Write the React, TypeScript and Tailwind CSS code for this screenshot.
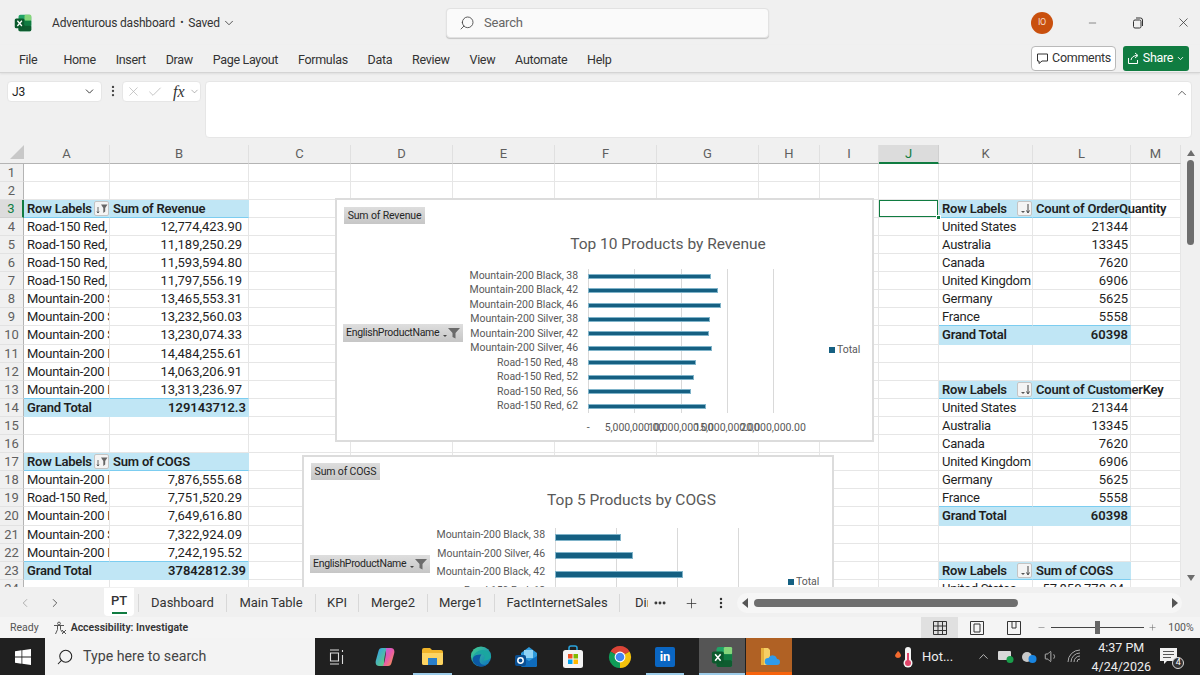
import {
  Check,
  ChevronDown,
  ChevronLeft,
  ChevronRight,
  ChevronUp,
  Ellipsis,
  EllipsisVertical,
  Minus,
  Plus,
  Search,
  Volume1,
  X,
} from 'lucide-react'
import type { ReactNode } from 'react'
import clsx from 'clsx'

const UI = "font-['Roboto',sans-serif]"

const menus = ['Home', 'Insert', 'Draw', 'Page Layout', 'Formulas', 'Data', 'Review', 'View', 'Automate', 'Help']
const columns = ['A', 'B', 'C', 'D', 'E', 'F', 'G', 'H', 'I', 'J', 'K', 'L', 'M']

type Cell = {
  text?: string
  bold?: boolean
  right?: boolean
  blue?: boolean
  line?: boolean
  spill?: boolean
  pad?: boolean
  button?: 'filter' | 'sort'
}

const cells: Record<string, Cell> = {}

function pivot(a: string, b: string, start: number, heading: string, rows: [string, string][], total: string, button: 'filter' | 'sort') {
  cells[a + start] = { text: 'Row Labels', bold: true, blue: true, line: true, button }
  cells[b + start] = { text: heading, bold: true, blue: true, line: true, spill: true }
  rows.forEach(([label, value], i) => {
    const last = i === rows.length - 1
    cells[a + (start + i + 1)] = { text: label, line: last }
    cells[b + (start + i + 1)] = { text: value, right: true, line: last, pad: value.includes(',') }
  })
  const end = start + rows.length + 1
  cells[a + end] = { text: 'Grand Total', bold: true, blue: true }
  cells[b + end] = { text: total, bold: true, blue: true, right: true }
}

pivot('A', 'B', 3, 'Sum of Revenue', [
  ['Road-150 Red,', '12,774,423.90'],
  ['Road-150 Red,', '11,189,250.29'],
  ['Road-150 Red,', '11,593,594.80'],
  ['Road-150 Red,', '11,797,556.19'],
  ['Mountain-200 Silver, 46', '13,465,553.31'],
  ['Mountain-200 Silver, 42', '13,232,560.03'],
  ['Mountain-200 Silver, 38', '13,230,074.33'],
  ['Mountain-200 Black, 46', '14,484,255.61'],
  ['Mountain-200 Black, 42', '14,063,206.91'],
  ['Mountain-200 Black, 38', '13,313,236.97'],
], '129143712.3', 'filter')

pivot('A', 'B', 17, 'Sum of COGS', [
  ['Mountain-200 Black, 46', '7,876,555.68'],
  ['Road-150 Red,', '7,751,520.29'],
  ['Mountain-200 Black, 42', '7,649,616.80'],
  ['Mountain-200 Silver, 46', '7,322,924.09'],
  ['Mountain-200 Black, 38', '7,242,195.52'],
], '37842812.39', 'filter')

const countries: [string, string][] = [
  ['United States', '21344'],
  ['Australia', '13345'],
  ['Canada', '7620'],
  ['United Kingdom', '6906'],
  ['Germany', '5625'],
  ['France', '5558'],
]
pivot('K', 'L', 3, 'Count of OrderQuantity', countries, '60398', 'sort')
pivot('K', 'L', 13, 'Count of CustomerKey', countries, '60398', 'sort')
cells.K23 = { text: 'Row Labels', bold: true, blue: true, line: true, button: 'sort' }
cells.L23 = { text: 'Sum of COGS', bold: true, blue: true, line: true }
cells.K24 = { text: 'United States' }
cells.L24 = { text: '57,850,778.04', right: true, pad: true }

const revenueBars = [
  { label: 'Mountain-200 Black, 38', w: 123 },
  { label: 'Mountain-200 Black, 42', w: 130 },
  { label: 'Mountain-200 Black, 46', w: 133 },
  { label: 'Mountain-200 Silver, 38', w: 122 },
  { label: 'Mountain-200 Silver, 42', w: 121 },
  { label: 'Mountain-200 Silver, 46', w: 124 },
  { label: 'Road-150 Red, 48', w: 108 },
  { label: 'Road-150 Red, 52', w: 106 },
  { label: 'Road-150 Red, 56', w: 103 },
  { label: 'Road-150 Red, 62', w: 118 },
]
const cogsBars = [
  { label: 'Mountain-200 Black, 38', w: 66 },
  { label: 'Mountain-200 Silver, 46', w: 78 },
  { label: 'Mountain-200 Black, 42', w: 128 },
  { label: 'Road-150 Red, 62', w: 60 },
]
const ticks = ['-', '5,000,000.00', '10,000,000.00', '15,000,000.00', '20,000,000.00']

function ExcelIcon({ size = 18 }: { size?: number }) {
  return (
    <svg width={size} height={size} viewBox="0 0 24 24">
      <rect x="6" y="1" width="17" height="22" rx="2.5" fill="#21a366" />
      <rect x="14" y="1" width="9" height="8" rx="1.5" fill="#86d67a" />
      <rect x="6" y="15" width="17" height="8" rx="2" fill="#0e5c2f" />
      <rect x="14" y="9" width="9" height="6.5" fill="#107c41" />
      <rect x="1" y="6" width="13" height="13" rx="2" fill="#0b5a2d" />
      <path d="M4.5 9l6 7M10.5 9l-6 7" stroke="#fff" strokeWidth="1.7" />
    </svg>
  )
}

function FilterMark({ sort }: { sort?: boolean }) {
  return (
    <svg width="12" height="12" viewBox="0 0 12 12">
      {sort ? (
        <>
          <path d="M2 8h4L4 10z" fill="#555" />
          <path d="M9 1v8" stroke="#444" strokeWidth="1" />
          <path d="M7.5 7.5L9 10l1.5-2.5" stroke="#444" strokeWidth="1" fill="none" />
        </>
      ) : (
        <>
          <path d="M5 1.5h6.5L9.2 5v3.5L7.3 10V5z" fill="#666" />
          <path d="M2 4v6M1 8.5L2 10l1-1.5" stroke="#444" strokeWidth=".8" fill="none" />
        </>
      )}
    </svg>
  )
}

function SheetCell({ cell, col, row }: { cell?: Cell; col: string; row: number }) {
  const active = col === 'J' && row === 3
  return (
    <div
      className={clsx(
        'relative min-h-0 min-w-0 whitespace-nowrap border-r border-b text-[13px] leading-[18px] text-[#1f1f1f]',
        cell?.blue ? 'border-r-[#c0e6f5] bg-[#c0e6f5]' : 'border-r-[#e6e6e6] bg-white',
        cell?.line ? 'border-b-[#7ccdf0]' : cell?.blue ? 'border-b-[#c0e6f5]' : 'border-b-[#e6e6e6]',
        cell?.bold ? 'font-semibold tracking-[-0.2px]' : 'tracking-[-0.25px]',
        cell?.right && 'text-right tracking-normal',
        cell?.right ? (cell.pad ? 'pr-[6px]' : 'pr-[2px]') : 'pl-[3px]',
        cell?.spill ? 'z-10 overflow-visible' : 'overflow-hidden',
      )}
    >
      {cell?.spill ? <span className="absolute left-[3px]">{cell.text}</span> : cell?.text}
      {cell?.button && (
        <span className="absolute top-[1px] right-0 flex h-[15px] w-[15px] items-center justify-center rounded-[2px] border border-[#c4c4c4] bg-[#f4f4f4]">
          <FilterMark sort={cell.button === 'sort'} />
        </span>
      )}
      {active && <span className="absolute top-[-1px] left-[-1px] h-[19px] w-[61px] border-2 border-[#107c41]" />}
    </div>
  )
}

function Sheet() {
  const rows = Array.from({ length: 24 }, (_, i) => i + 1)
  const tracks = 'grid-cols-[24px_86px_139px_102px_102px_102px_102px_102px_61px_59px_60px_94px_98px_50px]'
  return (
    <div className="flex h-[442px]">
      <div className="relative w-[1181px] overflow-hidden">
        <div className={clsx('grid h-[19px] grid-rows-[minmax(0,1fr)] text-[13px] text-[#5f5f5f]', tracks)}>
          <div className="border-b border-b-[#b4b4b4] pl-[10px]">
            <div className="h-0 w-0 border-b-[14px] border-l-[14px] border-b-[#c8c8c8] border-l-transparent" />
          </div>
          {columns.map((c) => (
            <div
              key={c}
              className={clsx(
                'min-h-0 border-r border-b text-center leading-[18px]',
                c === 'J'
                  ? 'border-r-[#d0d0d0] border-b-2 border-b-[#107c41] bg-[#dcdcdc] text-[#107c41]'
                  : 'border-r-[#e0e0e0] border-b-[#b4b4b4]',
              )}
            >
              {c}
            </div>
          ))}
        </div>
        {rows.map((r) => (
          <div key={r} className={clsx('grid grid-rows-[minmax(0,1fr)]', tracks, r % 10 === 0 ? 'h-[19px]' : 'h-[18px]')}>
            <div
              className={clsx(
                'min-h-0 border-r border-b text-center text-[13px] leading-[18px]',
                r === 3
                  ? 'border-r-2 border-r-[#107c41] border-b-[#d0d0d0] bg-[#dcdcdc] text-[#107c41]'
                  : 'border-r-[#b4b4b4] border-b-[#e2e2e2] text-[#5f5f5f]',
              )}
            >
              {r}
            </div>
            {columns.map((c) => (
              <SheetCell key={c} col={c} row={r} cell={cells[c + r]} />
            ))}
          </div>
        ))}

        <span className="absolute top-[70px] left-[936px] z-20 h-[5px] w-[5px] border border-white bg-[#107c41]" />

        {/* floating pivot charts */}
        <Chart
          className="top-[53px] left-[335px] h-[244px] w-[539px]"
          title="Top 10 Products by Revenue"
          field="Sum of Revenue"
          bars={revenueBars}
          rowH="h-[14.44px]"
          barH="h-[5px]"
          plotW="w-[185px]"
          step="w-[46.25px]"
          legendGap="ml-[56px] mt-[74px]"
          titleH="pt-[34px] pb-[15px]"
          fieldBtn="top-[7px] left-[7px] w-[81px]"
          nameBtn="top-[124px] left-[6px]"
          gridCount={5}
          showTicks
        />
        <Chart
          className="top-[310px] left-[302px] h-[200px] w-[532px]"
          title="Top 5 Products by COGS"
          field="Sum of COGS"
          bars={cogsBars}
          rowH="h-[18.6px]"
          barH="h-[7px]"
          plotW="w-[183px]"
          step="w-[61px]"
          legendGap="ml-[50px] mt-[47px]"
          titleH="pt-[33px] pb-[18px]"
          fieldBtn="top-[6px] left-[7px] w-[69px]"
          nameBtn="top-[98px] left-[6px]"
          gridCount={4}
        />
      </div>
      <div className="flex w-[19px] flex-col items-center bg-[#f0f0f0] pt-[3px]">
        <svg width="10" height="8" viewBox="0 0 10 8" className="mt-[1px]"><path d="M5 1l4 6H1z" fill="#6e6e6e" /></svg>
        <div className="mt-[3px] h-[85px] w-[7px] rounded-full bg-[#6e6e6e]" />
        <div className="flex-1" />
        <svg width="10" height="8" viewBox="0 0 10 8" className="mb-[5px]"><path d="M5 7L1 1h8z" fill="#6e6e6e" /></svg>
      </div>
    </div>
  )
}

type ChartProps = {
  className: string
  title: string
  field: string
  bars: { label: string; w: number }[]
  rowH: string
  barH: string
  plotW: string
  step: string
  legendGap: string
  titleH: string
  fieldBtn: string
  nameBtn: string
  gridCount: number
  showTicks?: boolean
}

function Chart(p: ChartProps) {
  return (
    <div className={clsx('absolute z-20 border-2 border-[#dcdcdc] bg-white', UI, p.className)}>
      <div className={clsx('absolute flex h-[17px] items-center justify-center bg-linear-to-b from-[#dedede] to-[#c6c6c6] text-[10.5px] tracking-[-0.15px] text-[#262626]', p.fieldBtn)}>
        {p.field}
      </div>
      <div className={clsx('absolute flex h-[18px] w-[120px] items-center justify-between bg-linear-to-b from-[#dedede] to-[#c6c6c6] pr-[3px] pl-[3px] text-[10.5px] tracking-[-0.3px] text-[#262626]', p.nameBtn)}>
        EnglishProductName
        <span className="flex items-center">
          <span className="mt-[5px] mr-[1px] h-0 w-0 border-x-[2px] border-t-[2px] border-x-transparent border-t-[#444]" />
          <svg width="12" height="12" viewBox="0 0 12 12"><path d="M0 1h12L7.5 6v5.5L4.5 10V6z" fill="#6b6b6b" /></svg>
        </span>
      </div>

      <div className={clsx('pl-[127px] text-center text-[15.5px] leading-[20px] text-[#595959]', p.titleH)}>{p.title}</div>

      <div className="flex text-[10.5px] tracking-[-0.05px] text-[#595959]">
        <div className="w-[251px] pr-[10px] text-right">
          {p.bars.map((b) => (
            <div key={b.label} className={clsx('whitespace-nowrap leading-[14px]', p.rowH)}>{b.label}</div>
          ))}
        </div>
        <div className={clsx('relative', p.plotW)}>
          <div className="absolute inset-0 flex">
            {Array.from({ length: p.gridCount }, (_, i) => (
              <div key={i} className={clsx('shrink-0 border-l border-[#d9d9d9]', p.step)} />
            ))}
          </div>
          {p.bars.map((b) => (
            <div key={b.label} className={clsx('relative flex items-center', p.rowH)}>
              <div className={clsx('border border-[#7fb3c9] bg-[#156082]', p.barH)} style={{ width: b.w }} />
            </div>
          ))}
          {p.showTicks && (
            <div className="absolute top-full left-[-23px] mt-[7px] flex">
              {ticks.map((t) => (
                <div key={t} className={clsx('flex shrink-0 justify-center whitespace-nowrap', p.step)}>{t}</div>
              ))}
            </div>
          )}
        </div>
        <div className={clsx('flex h-[14px] items-center gap-[2px]', p.legendGap)}>
          <span className="h-[6px] w-[6px] bg-[#156082]" />
          Total
        </div>
      </div>
    </div>
  )
}

function TitleBar() {
  return (
    <div className="flex h-[45px] items-center text-[12px] tracking-[-0.2px] text-[#333]">
      <div className="flex w-[446px] items-center pl-[14px]">
        <ExcelIcon />
        <span className="ml-[20px]">Adventurous dashboard</span>
        <span className="mx-[5px] text-[10px]">•</span>
        <span>Saved</span>
        <ChevronDown size={14} strokeWidth={1.4} className="ml-[2px]" />
      </div>
      <div className="flex h-[30px] w-[323px] items-center rounded-[4px] border border-[#e2e2e2] bg-[#fafafa] pl-[12px] text-[13px] shadow-[0_1px_1px_rgba(0,0,0,0.18)]">
        <Search size={16} strokeWidth={1.3} className="-scale-x-100 text-[#444]" />
        <span className="ml-[9px] text-[#666]">Search</span>
      </div>
      <div className="ml-[262px] flex h-[22px] w-[22px] items-center justify-center rounded-full bg-[#c9500e] text-[9px] text-[#f5d9c8]">IO</div>
      <div className="ml-[34px] flex w-[11px] justify-center"><Minus size={12} strokeWidth={1.2} /></div>
      <svg width="12" height="12" viewBox="0 0 12 12" className="ml-[34px] text-[#333]">
        <rect x="1.5" y="3" width="7.5" height="8" rx="1.5" fill="none" stroke="currentColor" />
        <path d="M4 1h4.5A2 2 0 0 1 10.5 3v6" fill="none" stroke="currentColor" />
      </svg>
      <X size={15} strokeWidth={1.2} className="ml-[32px]" />
    </div>
  )
}

function MenuBar() {
  return (
    <div className="relative flex h-[28px] items-center border-b border-[#d4d4d4] text-[12.5px] tracking-[-0.3px] text-[#333] shadow-[0_1px_2px_rgba(0,0,0,0.08)]">
      <span className="ml-[19px] mr-[26px] pt-[4px]">File</span>
      <div className="flex gap-[19.8px] pt-[4px]">
        {menus.map((m) => (
          <span key={m}>{m}</span>
        ))}
      </div>
      <div className="ml-auto flex items-center gap-[7px] pr-[11px]">
        <div className="flex h-[25px] w-[85px] items-center justify-center gap-[3px] rounded-[4px] border border-[#b9b9b9] bg-white">
          <svg width="13" height="13" viewBox="0 0 13 13"><path d="M1.5 2h10v7H6l-3 2.5V9H1.5z" fill="none" stroke="#333" /></svg>
          Comments
        </div>
        <div className="flex h-[25px] w-[66px] items-center justify-center gap-[3px] rounded-[3px] bg-[#107c41] text-white">
          <svg width="13" height="13" viewBox="0 0 13 13" fill="none" stroke="#fff"><path d="M1.5 6v5.5h9V8M4 8c.5-3 3-4.5 6-4.5M8 1l3 2.5L8 6" /></svg>
          Share
          <ChevronDown size={9} strokeWidth={2.4} />
        </div>
      </div>
    </div>
  )
}

function FormulaBar() {
  return (
    <div className="flex h-[72px] items-start gap-[4px] pt-[8px] pr-[8px] pl-[7px] text-[#444]">
      <div className="flex h-[21px] w-[95px] items-center justify-between rounded-[4px] border border-[#e6e6e6] bg-white pr-[5px] pl-[4px] text-[12px] text-[#222]">
        J3
        <ChevronDown size={13} strokeWidth={1.6} />
      </div>
      <EllipsisVertical size={14} strokeWidth={2} className="mt-[3px] text-[#444]" />
      <div className="-ml-[2px] flex h-[21px] w-[79px] items-center rounded-[4px] border border-[#e6e6e6] bg-white pl-[3px] text-[#b0b0b0]">
        <X size={15} strokeWidth={1.1} />
        <Check size={16} strokeWidth={1.1} className="ml-[6px]" />
        <span className="ml-[10px] font-['Liberation_Serif',serif] text-[16px] text-[#333] italic">fx</span>
        <ChevronDown size={11} strokeWidth={1.2} className="ml-[4px] text-[#777]" />
      </div>
      <div className="flex h-[57px] flex-1 justify-end rounded-[4px] border border-[#e6e6e6] bg-white pt-[4px] pr-[2px]">
        <ChevronUp size={14} strokeWidth={1.4} />
      </div>
    </div>
  )
}

function SheetTabs() {
  const tabs = [
    { name: 'Dashboard', w: 'w-[88px]' },
    { name: 'Main Table', w: 'w-[89px]' },
    { name: 'KPI', w: 'w-[43px]' },
    { name: 'Merge2', w: 'w-[69px]' },
    { name: 'Merge1', w: 'w-[67px]' },
    { name: 'FactInternetSales', w: 'w-[125px]' },
  ]
  return (
    <div className="flex h-[30px] items-center pt-[2px] text-[13px] text-[#333]">
      <ChevronLeft size={14} strokeWidth={1.3} className="ml-[18px] text-[#999]" />
      <ChevronRight size={14} strokeWidth={1.3} className="ml-[16px]" />
      <div className="ml-[42px] -mt-[2px] flex h-[28px] w-[30px] flex-col items-center rounded-b-[4px] bg-white pt-[3px] font-medium">
        <span>PT</span>
        <span className="mt-[1px] h-[2px] w-[15px] bg-[#107c41]" />
      </div>
      <div className="ml-[4px] h-[18px] border-l border-[#d8d8d8]" />
      {tabs.map((t) => (
        <div key={t.name} className={clsx('h-[18px] border-r border-[#d8d8d8] text-center leading-[18px]', t.w)}>{t.name}</div>
      ))}
      <div className="ml-[15px] w-[13px] overflow-hidden whitespace-nowrap">DimProduct</div>
      <Ellipsis size={14} strokeWidth={3} className="ml-[5px]" />
      <Plus size={15} strokeWidth={1.2} className="ml-[17px]" />
      <EllipsisVertical size={14} strokeWidth={2.2} className="ml-[15px]" />
      <div className="mr-[18px] ml-[9px] flex h-[20px] flex-1 items-center rounded-full bg-[#f6f6f6] pr-[4px] pl-[5px]">
        <svg width="7" height="10" viewBox="0 0 7 10"><path d="M6 0v10L0 5z" fill="#555" /></svg>
        <div className="ml-[5px] h-[8px] w-[264px] rounded-full bg-[#6e6e6e]" />
        <svg width="7" height="10" viewBox="0 0 7 10" className="ml-auto"><path d="M1 0v10l6-5z" fill="#555" /></svg>
      </div>
    </div>
  )
}

function ViewIcon({ kind }: { kind: 'normal' | 'page' | 'break' }) {
  return (
    <svg width="14" height="14" viewBox="0 0 14 14" fill="none" stroke="#333">
      {kind === 'normal' && <path d="M.5.5h13v13H.5zM5 .5v13M9.5.5v13M.5 5h13M.5 9.5h13" />}
      {kind === 'page' && <path d="M.5.5h13v13H.5zM4 3h6v8H4z" />}
      {kind === 'break' && <path d="M.5.5h13v13H.5zM5 .5V7h4V.5" />}
    </svg>
  )
}

function StatusBar() {
  return (
    <div className="flex h-[21px] items-center bg-[#f4f4f4] text-[#444]">
      <span className="ml-[10px] text-[10.5px] text-[#555]">Ready</span>
      <svg width="14" height="14" viewBox="0 0 14 14" className="ml-[14px]" fill="none" stroke="#444" strokeWidth=".9">
        <circle cx="6" cy="2.5" r="1.4" />
        <path d="M1 4.5h10M4.500 5v3.500L2.500 13M7.500 5v3.500l2 3M9 9l4 4M13 9l-4 4" />
      </svg>
      <span className="ml-[4px] text-[10.5px] font-semibold text-[#333]">Accessibility: Investigate</span>
      <div className="ml-[733px] flex h-[21px] w-[37px] items-center justify-center bg-[#e0e0e0]"><ViewIcon kind="normal" /></div>
      <div className="ml-[12px]"><ViewIcon kind="page" /></div>
      <div className="ml-[23px]"><ViewIcon kind="break" /></div>
      <Minus size={9} strokeWidth={1.4} className="ml-[16px] text-[#666]" />
      <div className="relative ml-[5px] h-px w-[93px] bg-[#444]">
        <span className="absolute -top-[6px] left-[44px] h-[13px] w-[5px] bg-[#666]" />
      </div>
      <Plus size={9} strokeWidth={1.4} className="ml-[4px] text-[#666]" />
      <span className="ml-[11px] text-[10.5px] text-[#555]">100%</span>
    </div>
  )
}

function TaskSlot({ children, className }: { children: ReactNode; className: string }) {
  return <div className={clsx('flex h-[37px] items-center justify-center', className)}>{children}</div>
}

function Taskbar() {
  return (
    <div className="flex h-[37px] items-center bg-[#202020] text-white">
      <TaskSlot className="w-[45px]">
        <svg width="16" height="16" viewBox="0 0 16 16" fill="#fff"><path d="M0 2.200l6.500-.9v6.300H0zM7.300 1.200L16 0v7.600H7.300zM0 8.400h6.500v6.300L0 13.800zM7.300 8.400H16V16l-8.700-1.200z" /></svg>
      </TaskSlot>
      <div className="flex h-[37px] w-[270px] items-center bg-[#f3f3f3] pt-px pl-[11px] text-[14.2px] text-[#444]">
        <Search size={18} strokeWidth={1.4} className="-scale-x-100 text-[#222]" />
        <span className="ml-[9px]">Type here to search</span>
      </div>
      <TaskSlot className="ml-[14px] w-[16px]">
        <svg width="16" height="16" viewBox="0 0 16 16" fill="none" stroke="#ddd" strokeWidth="1.1"><path d="M1 1h9M1 15h9M1.5 4h8v8h-8zM13.500 1v2M13.500 6v9" /></svg>
      </TaskSlot>
      <TaskSlot className="ml-[29px] w-[22px]">
        <svg width="22" height="22" viewBox="0 0 22 22">
          <defs>
            <linearGradient id="cp1" x1="0" y1="0" x2="1" y2="1"><stop offset="0" stopColor="#2b9df4" /><stop offset="1" stopColor="#6fd36b" /></linearGradient>
            <linearGradient id="cp2" x1="0" y1="0" x2="1" y2="1"><stop offset="0" stopColor="#b05be9" /><stop offset=".5" stopColor="#e95ba8" /><stop offset="1" stopColor="#f8a13c" /></linearGradient>
          </defs>
          <path d="M8 2h5c-2 4-3 12-3 18H5c-3 0-4-3-3-6l2.500-9C5 3 6 2 8 2z" fill="url(#cp1)" />
          <path d="M14 20H9c2-4 3-12 3-18h5c3 0 4 3 3 6l-2.500 9c-.5 2-1.500 3-3.500 3z" fill="url(#cp2)" />
        </svg>
      </TaskSlot>
      <TaskSlot className="relative ml-[17px] w-[39px]">
        <svg width="21" height="19" viewBox="0 0 21 19">
          <path d="M0 3a2 2 0 0 1 2-2h6l2 2h9a2 2 0 0 1 2 2v11a2 2 0 0 1-2 2H2a2 2 0 0 1-2-2z" fill="#f0b429" />
          <path d="M0 6h21v10a2 2 0 0 1-2 2H2a2 2 0 0 1-2-2z" fill="#fcd462" />
          <rect x="6" y="11" width="9" height="7" fill="#2a7fc9" />
        </svg>
        <span className="absolute right-0 bottom-0 left-0 h-[2px] bg-[#9ccbe8]" />
      </TaskSlot>
      <TaskSlot className="ml-[18px] w-[22px]">
        <svg width="23" height="23" viewBox="0 0 24 24">
          <defs><linearGradient id="ed" x1="0" y1="0" x2="1" y2="1"><stop offset="0" stopColor="#45d18e" /><stop offset="1" stopColor="#0b70c4" /></linearGradient></defs>
          <circle cx="12" cy="12" r="11" fill="url(#ed)" />
          <path d="M23 13c0-5-4-8-9-8-6 0-10 4-11 9 1-3 4-5 8-5 3 0 5 2 5 4 0 1-1 2-2 3 4 1 8-1 9-3z" fill="#1aa6a0" />
          <path d="M3 14c-1 5 4 9 9 9 2 0 4-.5 6-2-6 1-9-3-7-8 0-1 1-3 2-3-5-1-9 1-10 4z" fill="#0c59a4" />
        </svg>
      </TaskSlot>
      <TaskSlot className="ml-[23px] w-[22px]">
        <svg width="22" height="22" viewBox="0 0 22 22">
          <path d="M6 7l8-6 8 6v12a2 2 0 0 1-2 2H8a2 2 0 0 1-2-2z" fill="#2f9bdc" />
          <path d="M9 4h9v8H9z" fill="#8fd3f6" />
          <path d="M6 10l8 5 8-5v9a2 2 0 0 1-2 2H8a2 2 0 0 1-2-2z" fill="#0f6cbd" />
          <rect x="0" y="9" width="11" height="11" rx="2" fill="#0a4f92" />
          <circle cx="5.5" cy="14.5" r="2.7" fill="none" stroke="#fff" strokeWidth="1.5" />
        </svg>
      </TaskSlot>
      <TaskSlot className="ml-[25px] w-[22px]">
        <svg width="22" height="24" viewBox="0 0 22 24">
          <path d="M7 6V3a2 2 0 0 1 2-2h4a2 2 0 0 1 2 2v3" fill="none" stroke="#2aa4dd" strokeWidth="1.5" />
          <rect x="1" y="5" width="20" height="18" rx="2.5" fill="#f4f4f4" />
          <rect x="6" y="9" width="4.5" height="4.5" fill="#f25022" />
          <rect x="11.5" y="9" width="4.5" height="4.5" fill="#7fba00" />
          <rect x="6" y="14.5" width="4.5" height="4.5" fill="#00a4ef" />
          <rect x="11.5" y="14.5" width="4.5" height="4.5" fill="#ffb900" />
        </svg>
      </TaskSlot>
      <TaskSlot className="ml-[24px] w-[24px]">
        <svg width="24" height="24" viewBox="0 0 24 24">
          <path d="M12 12L2.470 6.500A11 11 0 0 1 21.530 6.500z" fill="#db4437" />
          <path d="M12 12l9.530-5.500A11 11 0 0 1 12 23z" fill="#f4c20d" />
          <path d="M12 12v11A11 11 0 0 1 2.470 6.500z" fill="#0f9d58" />
          <circle cx="12" cy="12" r="5.4" fill="#fff" />
          <circle cx="12" cy="12" r="4.3" fill="#4285f4" />
        </svg>
      </TaskSlot>
      <TaskSlot className="relative ml-[14px] w-[38px]">
        <div className="flex h-[20px] w-[20px] items-center justify-center rounded-[2px] bg-[#0a66c2] text-[13px] font-bold text-white">in</div>
        <span className="absolute right-0 bottom-0 left-0 h-[2px] bg-[#9ccbe8]" />
      </TaskSlot>
      <TaskSlot className="relative ml-[15px] w-[46px] bg-[#555]">
        <ExcelIcon size={22} />
        <span className="absolute right-0 bottom-0 left-0 h-[2px] bg-[#9ccbe8]" />
      </TaskSlot>
      <TaskSlot className="relative ml-px w-[46px] bg-[#b06124]">
        <svg width="22" height="22" viewBox="0 0 22 22">
          <path d="M3 2h7l2 2v15H3z" fill="#f6cf65" />
          <path d="M3 2h3v17H3z" fill="#e8b23c" />
          <path d="M10 19a3.500 3.500 0 0 1 .5-7 4.500 4.500 0 0 1 8.500 1 3 3 0 0 1 0 6z" fill="#2f9bea" />
        </svg>
        <span className="absolute right-0 bottom-0 left-0 h-[3px] bg-[#f7630c]" />
      </TaskSlot>
      <TaskSlot className="ml-[102px] w-[20px]">
        <svg width="20" height="24" viewBox="0 0 20 24">
          <path d="M4 6c2 2 3 3 3 5a3.200 3.200 0 0 1-6 0c0-2 2-3 3-5z" fill="#f26a2e" />
          <rect x="11" y="2" width="6" height="16" rx="3" fill="#f4f4f4" />
          <circle cx="14" cy="18" r="4.5" fill="#f4f4f4" />
          <rect x="13" y="8" width="2" height="10" fill="#e2456a" />
          <circle cx="14" cy="18" r="3" fill="#e2456a" />
        </svg>
      </TaskSlot>
      <span className="ml-[8px] text-[13px] text-[#eee]">Hot...</span>
      <ChevronUp size={15} strokeWidth={1.3} className="ml-[23px] text-[#ddd]" />
      <svg width="16" height="13" viewBox="0 0 16 13" className="ml-[7px]">
        <rect x="0" y="1" width="13" height="9" rx="1" fill="#d8d8d8" />
        <circle cx="12" cy="9.5" r="3.5" fill="#1a9e4b" />
      </svg>
      <svg width="16" height="14" viewBox="0 0 16 14" className="ml-[7px]">
        <circle cx="6" cy="7" r="5" fill="#c8c8c8" />
        <circle cx="11.5" cy="9" r="4" fill="#1985e0" />
      </svg>
      <Volume1 size={15} strokeWidth={1.2} className="ml-[7px] text-[#ddd]" />
      <svg width="15" height="15" viewBox="0 0 15 15" fill="none" stroke="#aaa" className="ml-[8px]">
        <path d="M1 13A12 12 0 0 1 13 1M4 13a9 9 0 0 1 9-9M7 13a6 6 0 0 1 6-6M10 13a3 3 0 0 1 3-3" />
      </svg>
      <div className="ml-[9px] flex w-[60px] flex-col items-center text-[12.5px] leading-[19px] text-[#eee]">
        <span>4:37 PM</span>
        <span>4/24/2026</span>
      </div>
      <div className="relative ml-[9px]">
        <svg width="17" height="18" viewBox="0 0 17 18"><path d="M0 0h17v13H7l-3 3v-3H0z" fill="#f0f0f0" /><path d="M3 3.5h11M3 6.5h11M3 9.5h8" stroke="#555" /></svg>
        <span className="absolute -right-[7px] -bottom-[3px] flex h-[12px] w-[12px] items-center justify-center rounded-full border border-[#ddd] bg-[#333] text-[9px] text-white">4</span>
      </div>
    </div>
  )
}

export default function App() {
  return (
    <div className={clsx('flex h-[675px] w-[1200px] flex-col overflow-hidden bg-[#f0f0f0]', UI)}>
      <TitleBar />
      <MenuBar />
      <FormulaBar />
      <Sheet />
      <SheetTabs />
      <StatusBar />
      <Taskbar />
    </div>
  )
}
